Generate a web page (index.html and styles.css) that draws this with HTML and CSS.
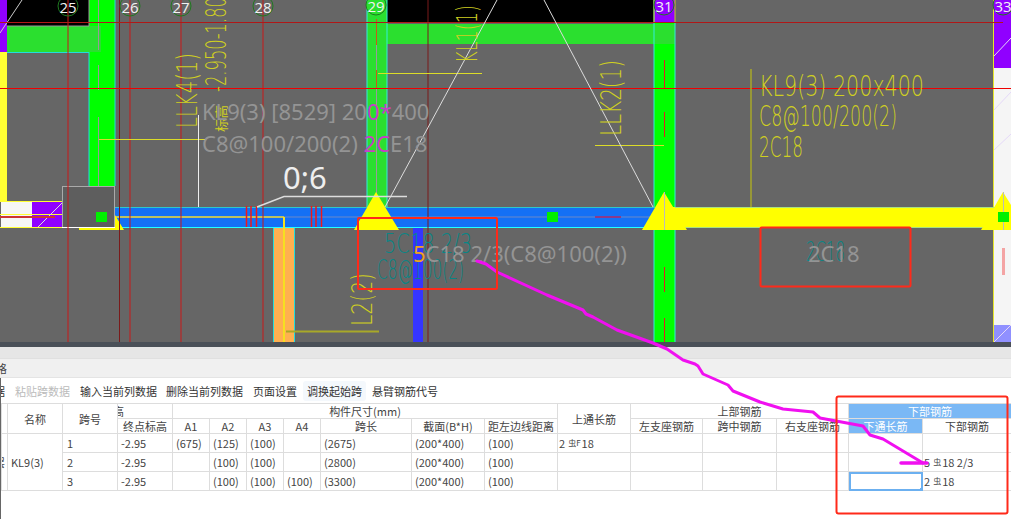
FILE: index.html
```html
<!DOCTYPE html>
<html lang="zh">
<head>
<meta charset="utf-8">
<title>梁平法表格</title>
<link rel="stylesheet" href="styles.css">
</head>
<body>
<div class="page">
  <svg class="cad" width="1011" height="342" viewBox="0 0 1011 342">
    <rect width="1011" height="342" fill="#666666"/>
    <!-- top-left block -->
    <rect x="7" y="0" width="82" height="26" fill="#000"/>
    <rect x="0" y="0" width="7" height="52" fill="#9000ff"/>
    <rect x="0" y="52" width="7" height="150" fill="#ffff33"/>
    <rect x="89" y="0" width="26" height="186" fill="#00ff00"/>
    <rect x="7" y="26" width="94" height="26" fill="#2bdf2f"/>
    <path d="M7 52.5H89M89 52V186M115 0V186" stroke="#22dddd" fill="none"/>
    <path d="M89 0V26H7" stroke="#999" fill="none"/>
    <path d="M98.5 0V50M98.5 65V90M98.5 117V186" stroke="#999" fill="none"/>
    <path d="M22 0L0 33" stroke="#ccc" fill="none"/>
    <!-- left stub -->
    <rect x="1" y="202" width="31" height="25" fill="#f6f6f6"/>
    <rect x="32" y="202" width="31" height="25" fill="#9000ff"/>
    <path d="M0 201.5H62M0 214.5H62M0 227.5H62" stroke="#ffff33" fill="none"/>
    <path d="M38 227L62 203" stroke="#ddd" fill="none"/>
    <path d="M0 217H55" stroke="#c33" stroke-width="2" fill="none"/>
    <!-- top black / band -->
    <rect x="387" y="0" width="267" height="23" fill="#000"/>
    <rect x="387" y="24" width="267" height="20" fill="#2bdf2f"/>
    <!-- column 29 -->
    <rect x="367" y="0" width="20" height="207" fill="#2bdf2f"/>
    <path d="M367 0V207M387 0V207" stroke="#33eedd" fill="none"/>
    <path d="M376.5 19V45" stroke="#c75a1a" fill="none"/>
    <path d="M376.5 45V70M376.5 88V207" stroke="#999" fill="none"/>
    <path d="M376.5 70V88" stroke="#c75a1a" fill="none"/>
    <!-- column 31 -->
    <rect x="654" y="0" width="21" height="342" fill="#00ff00"/>
    <rect x="654" y="0" width="21" height="22" fill="#9000ff"/>
    <rect x="654" y="24" width="21" height="20" fill="#2bdf2f"/>
    <path d="M654 0V342M675 22V342" stroke="#33eedd" fill="none"/>
    <path d="M664.5 60V88M664.5 112V137M664.5 267V292M664.5 318V342" stroke="#e02020" fill="none"/>
    <path d="M654 0V22M675 0V22" stroke="#c8c820" fill="none"/>
    <!-- right side -->
    <rect x="994" y="0" width="17" height="68" fill="#9000ff"/>
    <rect x="994" y="68" width="17" height="274" fill="#f5f5f5"/>
    <rect x="1002" y="248" width="3" height="27" fill="#f4a4a4"/>
    <rect x="994" y="325" width="17" height="17" fill="#9090ff"/>
    <path d="M993.5 0V342" stroke="#e6e62a" fill="none"/>
    <path d="M994 56L1011 38M994 110L1011 92M994 150L1011 134M994 342L1011 325" stroke="#e4d8f8" fill="none"/>
    <!-- orange / blue lower columns -->
    <rect x="273" y="228" width="22" height="114" fill="#ffb050"/>
    <path d="M273.5 228V342M294.5 228V342" stroke="#22dddd" fill="none"/>
    <rect x="413" y="228" width="10" height="114" fill="#3535ff"/>
    <!-- beams -->
    <rect x="115" y="207" width="540" height="20" fill="#1470f5"/>
    <path d="M115 207.5H655" stroke="#2cc8cc" fill="none"/>
    <path d="M115 227.5H655" stroke="#22ffff" fill="none"/>
    <path d="M115 217H655" stroke="#6a88c8" fill="none"/>
    <path d="M595 217H621" stroke="#8a3a8a" stroke-width="2" fill="none"/>
    <rect x="660" y="207" width="344" height="20" fill="#ffff00"/>
    <path d="M675 207.5H1004V227.5H675" stroke="#a8e080" fill="none"/>
    <path d="M115 217H284" stroke="#e8d838" stroke-width="1.500" fill="none"/>
    <path d="M284 217V342" stroke="#f5e020" stroke-width="2" fill="none"/>
    <path d="M286 331.5H379" stroke="#a8a828" stroke-width="2" fill="none"/>
    <path d="M246.500 206V227M251 206V227M256.500 206V227M311.500 206V227M316 206V227M321.500 206V227" stroke="#f01818" stroke-width="1.500" fill="none"/>
    <!-- triangles -->
    <path d="M115 215L124 230H79V228H115Z" fill="#ffff00"/>
    <path d="M376 192L399 230H354Z" fill="#ffff00"/>
    <path d="M664 192L687 230H642Z" fill="#ffff00"/>
    <path d="M1003 192L1011 205V230H981Z" fill="#ffff00"/>
    <path d="M664.500 192V230M1003.500 192V230" stroke="#bbb" fill="none"/>
    <!-- grey box -->
    <rect x="62.500" y="186.500" width="52" height="41" fill="#5e5e5e" stroke="#aaa"/>
    <path d="M62 227.500H115" stroke="#fff" fill="none"/>
    <rect x="96" y="212" width="11" height="10" fill="#00f000"/>
    <rect x="547" y="212" width="11" height="10" fill="#00f000"/>
    <rect x="998" y="212" width="11" height="10" fill="#00f000"/>
    <!-- grid lines -->
    <path d="M68 0V342M130 0V342M181 0V342M263 0V342" stroke="#c81818" fill="none"/>
    <path d="M119.500 0V342M428 0V342" stroke="#7a1a1a" fill="none"/>
    <path d="M0 22.500H1003" stroke="#b01818" fill="none"/>
    <path d="M0 88.500H1011" stroke="#f00000" fill="none"/>
    <!-- leaders -->
    <path d="M378 73.500H482M595 145.500H664M99 139.500H205" stroke="#dcdc28" fill="none"/>
    <path d="M751 69V207" stroke="#a8a828" stroke-width="1.500" fill="none"/>
    <path d="M198.500 115V207" stroke="#eee" fill="none"/>
    <path d="M257 207L284 196.500H407" stroke="#ddd" stroke-width="1.500" fill="none"/>
    <path d="M497 0L385 207M544 0L653 207" stroke="#ddd" fill="none"/>
    <!-- axis markers -->
    <g class="axis">
      <circle cx="68" cy="6" r="10"/><circle cx="130" cy="6" r="10"/><circle cx="181" cy="6" r="10"/><circle cx="263" cy="6" r="10"/>
      <circle class="axis-green" cx="376" cy="5" r="10"/>
      <circle class="axis-purple" cx="664" cy="5" r="10"/>
      <circle class="axis-purple" cx="1003" cy="5" r="10"/>
    </g>
    <g class="axis-text">
      <text x="68" y="13">25</text><text x="130" y="13">26</text><text x="181" y="13">27</text><text x="263" y="13">28</text>
      <text x="376" y="12">29</text><text x="664" y="12">31</text><text x="1003" y="12">33</text>
    </g>
    <!-- yellow CAD text -->
    <g class="cad-text">
      <text transform="translate(197 128) rotate(-90)" textLength="75" lengthAdjust="spacingAndGlyphs">LLK4(1)</text>
      <text transform="translate(226 92) rotate(-90)" textLength="95" lengthAdjust="spacingAndGlyphs">-2.950-1.80</text>
      <text transform="translate(477 63) rotate(-90)" textLength="58" lengthAdjust="spacingAndGlyphs">KL1(1)</text>
      <text transform="translate(621 136) rotate(-90)" textLength="76" lengthAdjust="spacingAndGlyphs">LLK2(1)</text>
      <text transform="translate(372 326) rotate(-90)" textLength="53" lengthAdjust="spacingAndGlyphs">L2(2)</text>
      <text x="759" y="96" textLength="165" lengthAdjust="spacingAndGlyphs">KL9(3) 200x400</text>
      <text x="759" y="126" textLength="138" lengthAdjust="spacingAndGlyphs">C8@100/200(2)</text>
      <text x="759" y="157" textLength="44" lengthAdjust="spacingAndGlyphs">2C18</text>
    </g>
    <text class="cad-small" transform="translate(226 132) rotate(-90)" textLength="27" lengthAdjust="spacingAndGlyphs">标高</text>
    <!-- teal text -->
    <g class="teal-text">
      <text x="384" y="253" textLength="88" lengthAdjust="spacingAndGlyphs">5C18 2/3</text>
      <text x="377" y="279" textLength="87" lengthAdjust="spacingAndGlyphs">C8@100(2)</text>
      <text x="806" y="261" textLength="39" lengthAdjust="spacingAndGlyphs">2C18</text>
    </g>
    <!-- grey overlay text -->
    <g class="ghost">
      <text x="202" y="120">KL9(3) [8529] 20<tspan class="ghost-mag">0*</tspan>400</text>
      <text x="202" y="152">C8@100/200(2) <tspan class="ghost-mag">2C</tspan>E18</text>
      <text x="413" y="262"><tspan class="ghost-orange">5</tspan>C18 2/3(C8@100(2))</text>
      <text x="808" y="262">2C18</text>
    </g>
    <text class="measure" x="283" y="189">0;6</text>
  </svg>

  <div class="band-dark"></div>
  <div class="band-light"></div>
  <div class="titlebar"><span class="title-clip"><span class="title-text">表格</span></span></div>

  <div class="panel">
    <div class="toolbar">
      <span class="tool-clip"><span class="tool-clip-text">数据</span></span>
      <span class="tool is-disabled">粘贴跨数据</span>
      <span class="tool">输入当前列数据</span>
      <span class="tool is-tight">删除当前列数据</span>
      <span class="tool">页面设置</span>
      <span class="tool is-hover">调换起始跨</span>
      <span class="tool">悬臂钢筋代号</span>
    </div>
    <table class="grid">
      <colgroup>
        <col class="c6"><col class="c55"><col class="c55"><col class="c55">
        <col class="c37"><col class="c37"><col class="c37"><col class="c37">
        <col class="c91"><col class="c73"><col class="c73"><col class="c73">
        <col class="c72"><col class="c74"><col class="c72"><col class="c74"><col class="c89">
      </colgroup>
      <thead>
        <tr class="r15">
          <th rowspan="2"></th>
          <th rowspan="2">名称</th>
          <th rowspan="2">跨号</th>
          <th class="clip-left"><span>高</span></th>
          <th colspan="7">构件尺寸(mm)</th>
          <th rowspan="2">上通长筋</th>
          <th colspan="3">上部钢筋</th>
          <th colspan="2" class="head-blue">下部钢筋</th>
        </tr>
        <tr class="r15">
          <th>终点标高</th>
          <th>A1</th><th>A2</th><th>A3</th><th>A4</th>
          <th>跨长</th><th>截面(B*H)</th><th>距左边线距离</th>
          <th>左支座钢筋</th><th>跨中钢筋</th><th>右支座钢筋</th>
          <th class="head-blue">下通长筋</th><th>下部钢筋</th>
        </tr>
      </thead>
      <tbody>
        <tr>
          <td rowspan="3" class="clip-left clip-far"><span>层</span></td>
          <td rowspan="3" class="name">KL9(3)</td>
          <td class="span-no">1</td><td class="pad">-2.95</td>
          <td>(675)</td><td>(125)</td><td>(100)</td><td></td>
          <td>(2675)</td><td>(200*400)</td><td>(100)</td>
          <td class="rebar">2<span class="bar">虫F</span>18</td>
          <td></td><td></td><td></td><td></td><td></td>
        </tr>
        <tr>
          <td class="span-no">2</td><td class="pad">-2.95</td>
          <td></td><td>(100)</td><td>(100)</td><td></td>
          <td>(2800)</td><td>(200*400)</td><td>(100)</td>
          <td></td><td></td><td></td><td></td><td></td>
          <td class="rebar">5<span class="bar">虫</span>18 2/3</td>
        </tr>
        <tr>
          <td class="span-no">3</td><td class="pad">-2.95</td>
          <td></td><td>(100)</td><td>(100)</td><td>(100)</td>
          <td>(3300)</td><td>(200*400)</td><td>(100)</td>
          <td></td><td></td><td></td><td></td><td class="selected"></td>
          <td class="rebar">2<span class="bar">虫</span>18</td>
        </tr>
      </tbody>
    </table>
  </div>

  <svg class="marks" width="1011" height="519" viewBox="0 0 1011 519">
    <path d="M477 261L486 264L497 272L547 295L583 310L586 314L593 317L617 330L653 343L667 349L683 360L695 364L698 366L703 374L728 385L733 391L760 402L783 409L813 412L820 418L863 426L870 435L883 439L923 463" stroke="#f010f0" stroke-width="3" fill="none" stroke-linejoin="round" stroke-linecap="round"/>
    <path d="M901 463H927" stroke="#f010f0" stroke-width="3.500" fill="none" stroke-linecap="round"/>
    <rect x="358" y="218" width="139" height="71" stroke="#ff2a1a" stroke-width="2" fill="none" rx="1"/>
    <rect x="760.500" y="227.500" width="150" height="59" stroke="#ff2a1a" stroke-width="2" fill="none" rx="1"/>
    <rect x="836.500" y="396.500" width="171" height="117" stroke="#ff2a1a" stroke-width="2" fill="none" rx="2"/>
  </svg>
</div>
</body>
</html>
```

FILE: styles.css
```css
html, body {
  margin: 0;
  padding: 0;
  background: #fff;
}

.page {
  position: relative;
  width: 1011px;
  height: 519px;
  overflow: hidden;
  font-family: "Noto Sans CJK SC", "Noto Sans", sans-serif;
  color: #444;
  display: flex;
  flex-direction: column;
}

.cad {
  display: block;
  flex: none;
}

.marks {
  position: absolute;
  left: 0;
  top: 0;
  pointer-events: none;
}

.axis circle {
  fill: none;
  stroke: #1f7a1f;
}
.axis .axis-green { fill: #2bdf2f; }
.axis .axis-purple { fill: #9000ff; }

.axis-text text {
  fill: #f2f2f2;
  font: 15px "Open Sans", sans-serif;
  text-anchor: middle;
}

.cad-text text {
  fill: #cfcf22;
  font-family: "DejaVu Sans", sans-serif;
  font-weight: 200;
  font-size: 29px;
}

.cad-small {
  fill: #cfcf22;
  font: 13px "Noto Sans CJK SC", sans-serif;
}

.teal-text text {
  fill: #0a8585;
  font-family: "DejaVu Sans", sans-serif;
  font-weight: 200;
  font-size: 26px;
}

.ghost text {
  fill: #949494;
  font: 22px "Noto Sans", sans-serif;
}
.ghost-mag { fill: #c83cc8; }
.ghost-orange { fill: #f0a020; }

.measure {
  fill: #eee;
  font: 31px "Noto Sans", sans-serif;
}

.band-dark {
  flex: none;
  height: 5px;
  background: #4a5058;
}
.band-light {
  flex: none;
  height: 11px;
  background: #e6e6e6;
}

.titlebar {
  flex: none;
  height: 20px;
  box-sizing: border-box;
  background: #f0f0f0;
  border-top: 1px solid #e0e0e0;
  border-bottom: 1px solid #e4e4e4;
  font-size: 11px;
  line-height: 18px;
}
.title-clip {
  display: flex;
  justify-content: flex-end;
  width: 7px;
  overflow: hidden;
}
.title-text { flex: none; }

.panel {
  flex: 1;
  background: #fff;
  border-left: 1px solid #666;
}

.toolbar {
  height: 25px;
  display: flex;
  align-items: center;
  gap: 2px;
  font-size: 11px;
  color: #333;
  white-space: nowrap;
}
.tool {
  padding: 0 4px;
  height: 20px;
  line-height: 20px;
  border-radius: 3px;
}
.tool-clip {
  display: flex;
  justify-content: flex-end;
  width: 4px;
  overflow: hidden;
  margin-right: 4px;
}
.tool-clip-text { flex: none; }
.is-disabled { color: #bbb; }
.is-tight { margin-left: -1px; }
.is-hover { background: #f4f8fc; }

.grid {
  border-collapse: collapse;
  table-layout: fixed;
  width: 1010px;
  font-size: 11px;
  color: #444;
}

.c6 { width: 6px; }
.c37 { width: 37px; }
.c55 { width: 55px; }
.c72 { width: 72px; }
.c73 { width: 73px; }
.c74 { width: 74px; }
.c89 { width: 89px; }
.c91 { width: 91px; }

.grid th,
.grid td {
  border: 1px solid #ddd;
  padding: 0 0 0 3px;
  height: 18px;
  overflow: hidden;
  white-space: nowrap;
  box-sizing: border-box;
}
.grid th {
  font-weight: 400;
  text-align: center;
  height: 15px;
  padding: 0;
  line-height: 14px;
}
.grid thead th[rowspan="2"] { height: 30px; }
.grid td { line-height: 17px; }
.grid tbody tr { height: 19px; }

.grid .clip-left {
  text-align: left;
  padding: 0;
}
.clip-left span {
  display: block;
  margin-left: -5px;
}
.clip-far span { margin-left: -8px; }

.grid .name { padding-left: 3px; }
.grid .span-no { padding-left: 4px; }
.grid .pad { padding-left: 3px; }
.grid .rebar { padding-left: 1px; }

.grid .head-blue {
  background: #7ab8f5;
  color: #fff;
}

.bar {
  font-size: 8px;
  vertical-align: 2px;
  margin: 0 1px 0 3px;
}

.grid .selected {
  position: relative;
  outline: 2px solid #6cb0f0;
  outline-offset: -2px;
}
.selected::after {
  content: "";
  position: absolute;
  right: -2px;
  bottom: -2px;
  width: 4px;
  height: 4px;
  background: #6cb0f0;
}
```
